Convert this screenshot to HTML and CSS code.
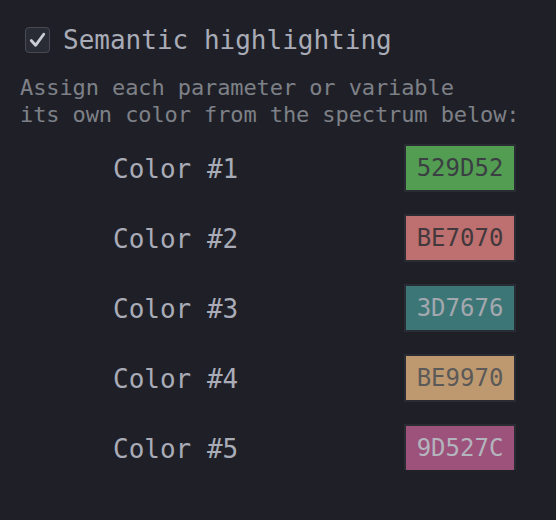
FILE: index.html
```html
<!DOCTYPE html>
<html lang="en">
<head>
    <meta charset="UTF-8">
    <meta name="viewport" content="width=device-width, initial-scale=1.0">
    <title>Semantic highlighting</title>
    <link rel="stylesheet" href="styles.css">
</head>
<body>

<div class="panel">
    <label class="toggle">
        <span class="checkbox">
            <svg viewBox="0 0 24 24" width="24" height="24">
                <path d="M5.5 12.5 L10 17.5 L18.5 6" fill="none" stroke="#caccd5" stroke-width="3" stroke-linecap="round" stroke-linejoin="round"/>
            </svg>
        </span>
        <span class="toggle-text">Semantic highlighting</span>
    </label>

    <p class="hint">Assign each parameter or variable<br>its own color from the spectrum below:</p>

    <div class="colors">
        <div class="color-row">
            <span class="color-name">Color #1</span>
            <span class="swatch swatch-green">529D52</span>
        </div>
        <div class="color-row">
            <span class="color-name">Color #2</span>
            <span class="swatch swatch-red">BE7070</span>
        </div>
        <div class="color-row">
            <span class="color-name">Color #3</span>
            <span class="swatch swatch-teal">3D7676</span>
        </div>
        <div class="color-row">
            <span class="color-name">Color #4</span>
            <span class="swatch swatch-tan">BE9970</span>
        </div>
        <div class="color-row">
            <span class="color-name">Color #5</span>
            <span class="swatch swatch-pink">9D527C</span>
        </div>
    </div>
</div>

</body>
</html>
```

FILE: styles.css
```css
body {
    margin: 0;
    background-color: #1f2027;
    font-family: "DejaVu Sans Mono", "Liberation Mono", monospace;
    color: #a9acb7;
}
.panel {
    padding: 27px 42px 0 20px;
}
.toggle {
    display: flex;
    align-items: center;
    gap: 13px;
    padding-left: 5px;
    height: 26px;
}
.checkbox {
    width: 23px;
    height: 24px;
    border: 1.5px solid #474a55;
    border-radius: 4px;
    background: #2a2c35;
    display: flex;
    align-items: center;
    justify-content: center;
}
.toggle-text {
    font-size: 26px;
    line-height: 26px;
}
.hint {
    margin: 21px 0 0 0;
    font-size: 22px;
    line-height: 27px;
    color: #7e8087;
    white-space: nowrap;
    letter-spacing: -0.1px;
}
.colors {
    display: flex;
    flex-direction: column;
    gap: 26px;
    margin-top: 18px;
    padding-left: 93px;
}
.color-row {
    display: flex;
    align-items: center;
    justify-content: space-between;
    height: 44px;
}
.color-name {
    font-size: 26px;
    line-height: 26px;
    padding-top: 2px;
}
.swatch {
    width: 108px;
    height: 44px;
    display: flex;
    align-items: center;
    justify-content: center;
    font-size: 24px;
    box-shadow: 0 0 0 2px #2a2c33;
}
.swatch-green {
    background: #529d52;
    color: #3b3f43;
}
.swatch-red {
    background: #be7070;
    color: #43393c;
}
.swatch-teal {
    background: #3d7676;
    color: #a3a8af;
}
.swatch-tan {
    background: #be9970;
    color: #5c5a58;
}
.swatch-pink {
    background: #9d527c;
    color: #b3b4bd;
}
```
